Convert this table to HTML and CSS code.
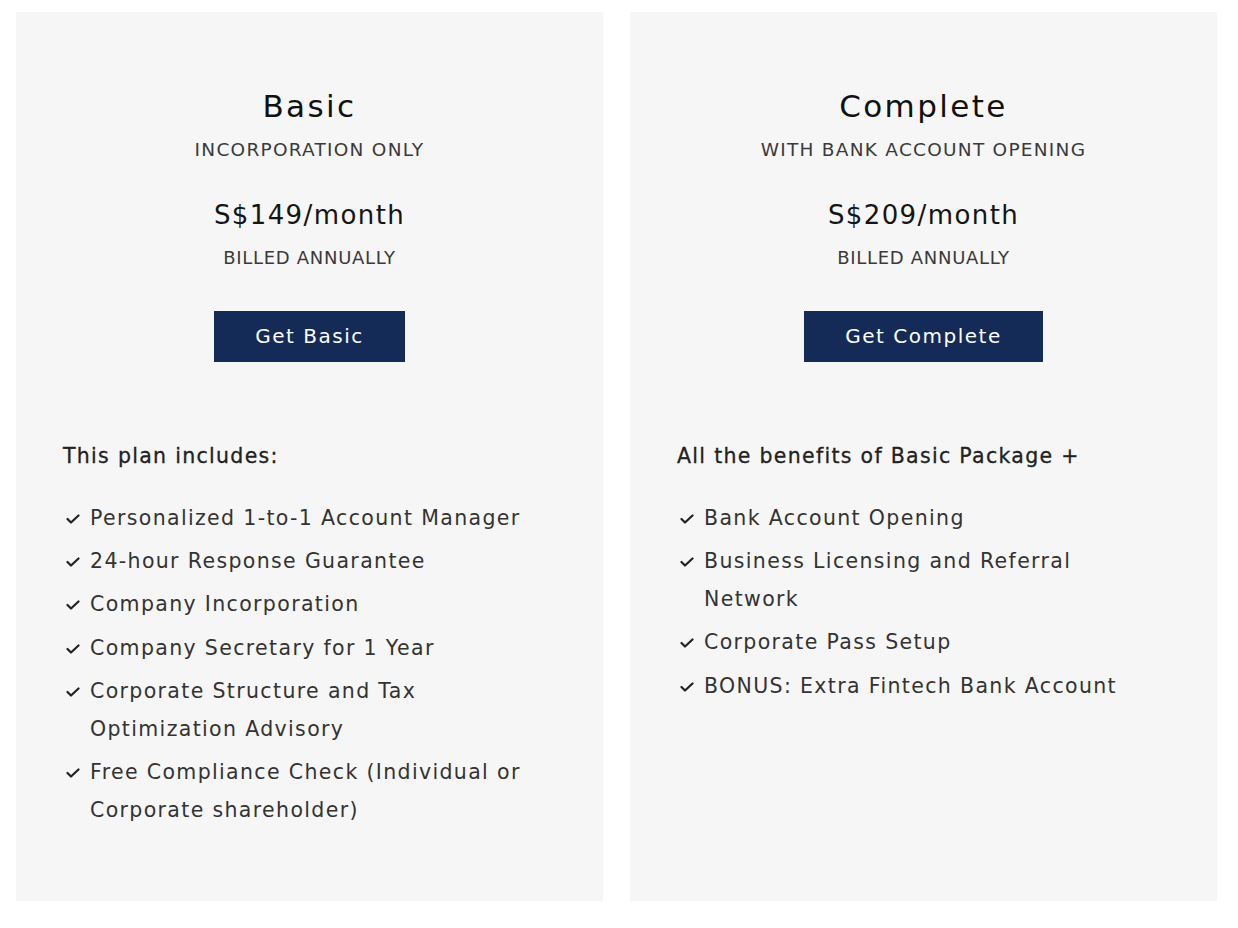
FILE: index.html
```html
<!DOCTYPE html>
<html lang="en">
<head>
<meta charset="utf-8">
<title>Plans</title>
<link rel="stylesheet" href="styles.css">
</head>
<body>
<div class="plans">
  <section class="card">
    <header class="card-head">
      <h2 class="plan-name">Basic</h2>
      <p class="plan-sub">INCORPORATION ONLY</p>
      <p class="plan-price">S$149/month</p>
      <p class="plan-billing">BILLED ANNUALLY</p>
      <a class="plan-btn" href="#">Get Basic</a>
    </header>
    <p class="includes">This plan includes:</p>
    <ul class="features">
      <li><svg class="check" viewBox="0 0 14 10"><path d="M1.5 5 L5 8.5 L12.5 1.5"/></svg><span>Personalized 1-to-1 Account Manager</span></li>
      <li><svg class="check" viewBox="0 0 14 10"><path d="M1.5 5 L5 8.5 L12.5 1.5"/></svg><span>24-hour Response Guarantee</span></li>
      <li><svg class="check" viewBox="0 0 14 10"><path d="M1.5 5 L5 8.5 L12.5 1.5"/></svg><span>Company Incorporation</span></li>
      <li><svg class="check" viewBox="0 0 14 10"><path d="M1.5 5 L5 8.5 L12.5 1.5"/></svg><span>Company Secretary for 1 Year</span></li>
      <li><svg class="check" viewBox="0 0 14 10"><path d="M1.5 5 L5 8.5 L12.5 1.5"/></svg><span>Corporate Structure and Tax<br>Optimization Advisory</span></li>
      <li><svg class="check" viewBox="0 0 14 10"><path d="M1.5 5 L5 8.5 L12.5 1.5"/></svg><span>Free Compliance Check (Individual or<br>Corporate shareholder)</span></li>
    </ul>
  </section>
  <section class="card">
    <header class="card-head">
      <h2 class="plan-name">Complete</h2>
      <p class="plan-sub">WITH BANK ACCOUNT OPENING</p>
      <p class="plan-price">S$209/month</p>
      <p class="plan-billing">BILLED ANNUALLY</p>
      <a class="plan-btn" href="#">Get Complete</a>
    </header>
    <p class="includes">All the benefits of Basic Package +</p>
    <ul class="features">
      <li><svg class="check" viewBox="0 0 14 10"><path d="M1.5 5 L5 8.5 L12.5 1.5"/></svg><span>Bank Account Opening</span></li>
      <li><svg class="check" viewBox="0 0 14 10"><path d="M1.5 5 L5 8.5 L12.5 1.5"/></svg><span>Business Licensing and Referral<br>Network</span></li>
      <li><svg class="check" viewBox="0 0 14 10"><path d="M1.5 5 L5 8.5 L12.5 1.5"/></svg><span>Corporate Pass Setup</span></li>
      <li><svg class="check" viewBox="0 0 14 10"><path d="M1.5 5 L5 8.5 L12.5 1.5"/></svg><span>BONUS: Extra Fintech Bank Account</span></li>
    </ul>
  </section>
</div>
</body>
</html>
```

FILE: styles.css
```css
* { box-sizing: border-box; }
html, body { margin: 0; padding: 0; background: #ffffff; }
body {
  font-family: "DejaVu Sans", "Liberation Sans", sans-serif;
  color: #2b2b2b;
  padding: 12px 21px 0 16px;
}
.plans {
  display: grid;
  grid-template-columns: 587px 587px;
  gap: 27px;
}
.card {
  background: #f6f6f6;
  height: 889px;
  padding: 76px 47px 0 47px;
}
.card-head {
  display: flex;
  flex-direction: column;
  align-items: center;
  text-align: center;
}
.plan-name {
  margin: 0;
  font-size: 31px;
  font-weight: 400;
  line-height: 36px;
  letter-spacing: 2.4px;
  color: #111;
}
.plan-sub {
  margin: 14px 0 0;
  font-size: 18.5px;
  line-height: 24px;
  letter-spacing: 1.25px;
  color: #3a3a3a;
}
.plan-price {
  margin: 36px 0 0;
  font-size: 26px;
  line-height: 34px;
  letter-spacing: 1.4px;
  color: #151515;
}
.plan-billing {
  margin: 15px 0 0;
  font-size: 18px;
  line-height: 22px;
  letter-spacing: 0.7px;
  color: #3a3a3a;
}
.plan-btn {
  margin-top: 42px;
  display: inline-block;
  background: #152b57;
  color: #fff;
  text-decoration: none;
  font-size: 20px;
  line-height: 51px;
  height: 51px;
  letter-spacing: 1.5px;
  padding: 0 41px;
}
.includes {
  margin: 79px 0 0;
  font-size: 20.5px;
  line-height: 30px;
  font-weight: 400;
  letter-spacing: 1.3px;
  color: #222;
  -webkit-text-stroke: 0.3px #222;
}
.features {
  list-style: none;
  margin: 28px 0 0;
  padding: 0;
}
.features li {
  display: flex;
  align-items: flex-start;
  font-size: 20.5px;
  line-height: 38px;
  letter-spacing: 1.35px;
  color: #333;
  margin-bottom: 5.2px;
}
.check {
  width: 14px;
  height: 10px;
  flex: none;
  margin: 15px 10px 0 3px;
  fill: none;
  stroke: #222;
  stroke-width: 2.2;
  stroke-linecap: round;
  stroke-linejoin: round;
}
```
